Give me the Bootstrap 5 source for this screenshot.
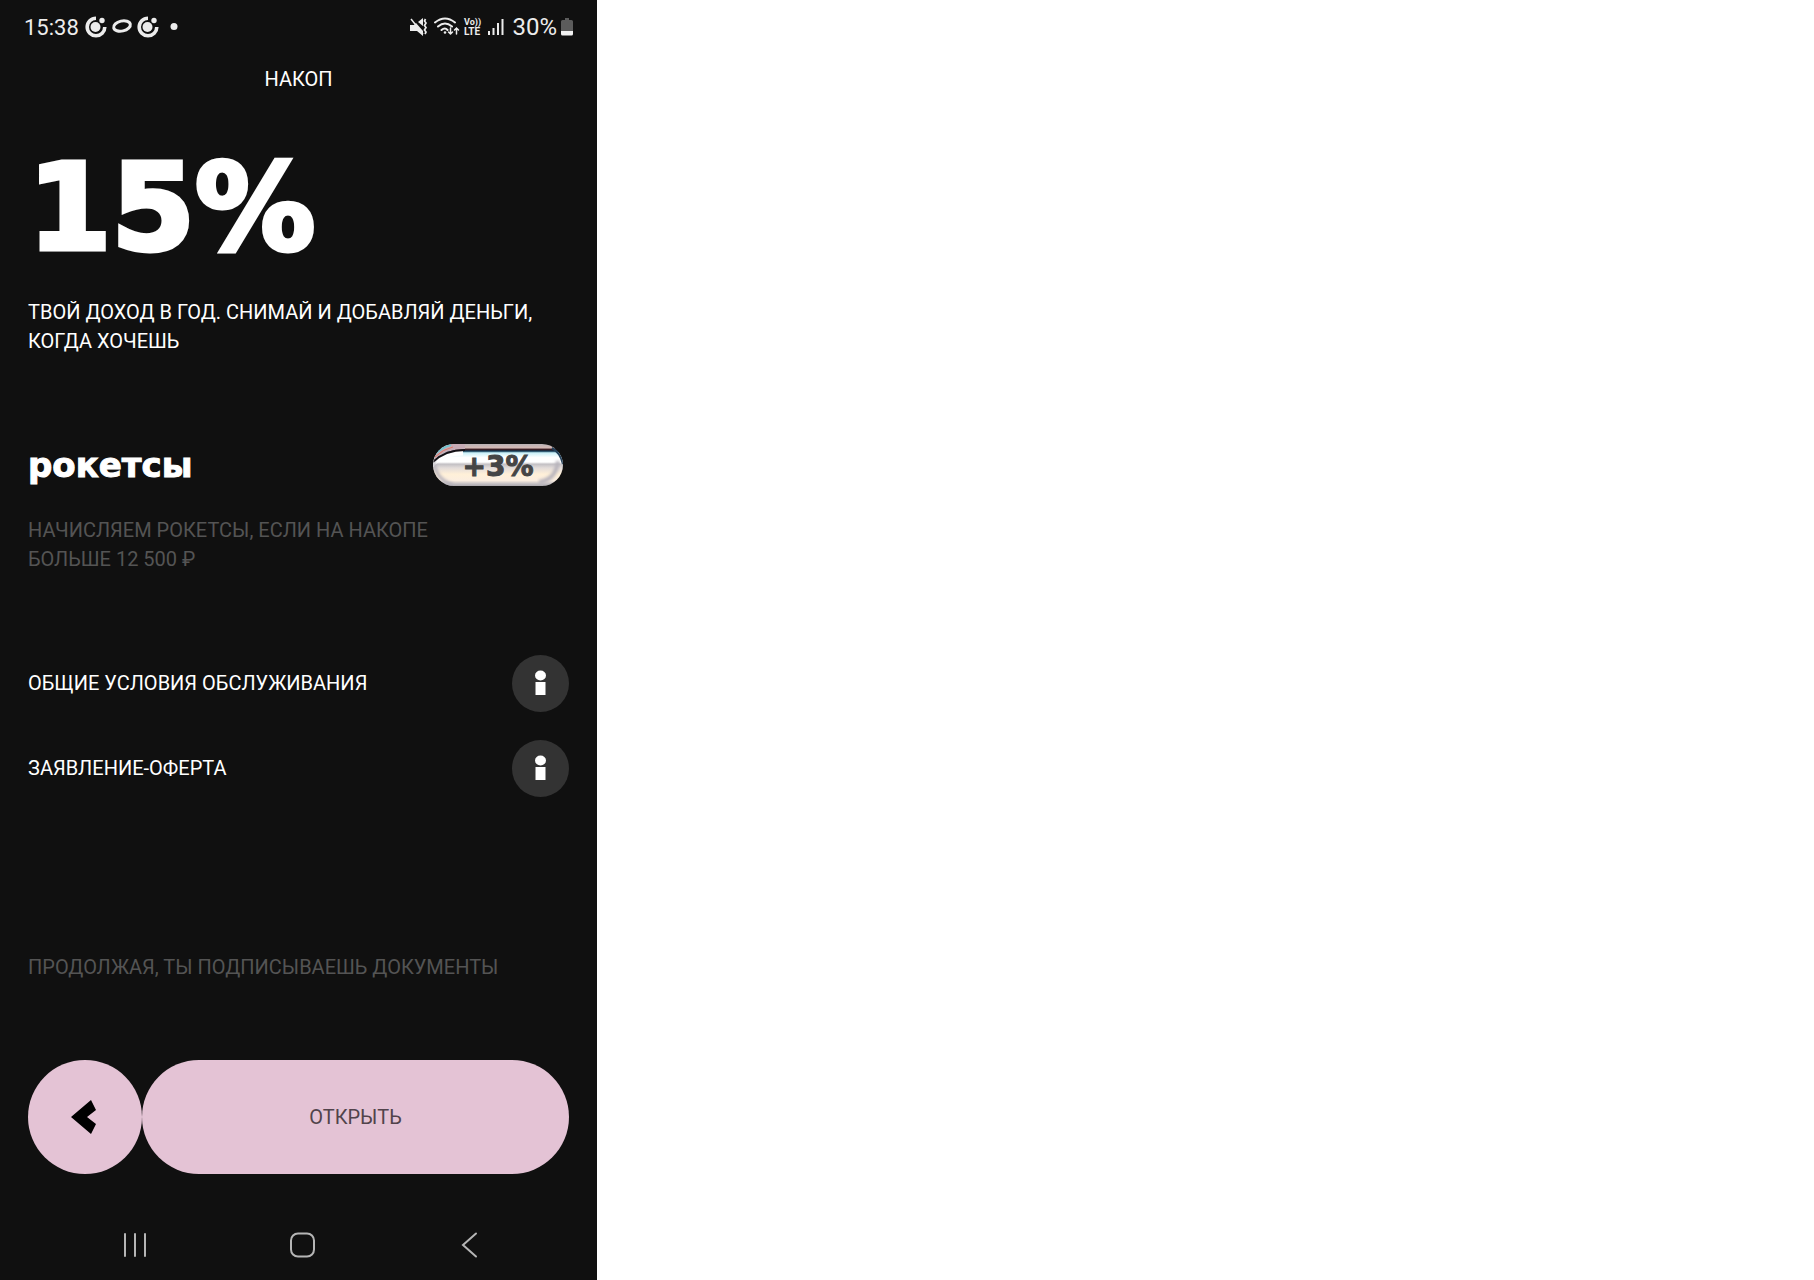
<!DOCTYPE html>
<html lang="ru">
<head>
<meta charset="utf-8">
<meta name="viewport" content="width=device-width, initial-scale=1">
<title>Накоп</title>
<link rel="stylesheet" href="https://cdn.jsdelivr.net/npm/bootstrap@5.3.0/dist/css/bootstrap.min.css">
<style>
  body { background: #fff; font-family: Roboto, "Liberation Sans", sans-serif; }
  .phone { max-width: 597px; background: #101010; color: #fff; font-size: 20px; line-height: 29px; font-family: Roboto, "Liberation Sans", sans-serif; }
  .status-bar { height: 54px; padding: 0 24px; color: #ececec; }
  .clock { font-size: 22px; }
  .status-left { gap: 6px; }
  .charge { font-size: 24px; }
  .screen-title { height: 50px; font-size: 20px; line-height: 50px; }
  .screen-body { padding: 0 28px; }
  .wide-face { font-family: "DejaVu Sans", sans-serif; font-weight: 700; }
  .rate { font-size: 120px; line-height: 116px; padding-top: 46px; -webkit-text-stroke: 5px #fff; }
  .rate-note { padding-top: 32px; }
  .bonus { padding: 88px 6px 0 0; }
  .bonus-name { font-size: 34px; line-height: 42px; -webkit-text-stroke: 1px #fff; }
  .bonus-pill { width: 130px; height: 42px; }
  .bonus-pill text { font-size: 28px; fill: #454545; stroke: #454545; stroke-width: 1px; }
  .dim { color: #545454; }
  .bonus-note { padding-top: 30px; max-width: 440px; }
  .docs { padding-top: 81px; gap: 28px; }
  .info-btn { width: 57px; height: 57px; background: #333; }
  .info-btn:hover { background: #444; }
  .consent { padding-top: 156px; }
  .actions { padding-top: 78px; }
  .pink { height: 114px; background: #e4c3d5; color: #51434b; font-size: 20px; }
  .pink:hover { background: #dab6ca; color: #51434b; }
  .pink-back { width: 114px; }
  .sys-nav { padding: 48px 98px 22px 106px; }
  svg { display: block; flex: none; }
</style>
</head>
<body>
<main class="phone w-100 min-vh-100 d-flex flex-column">
  <div class="status-bar d-flex align-items-center justify-content-between">
    <div class="status-left d-flex align-items-center">
      <span class="clock">15:38</span>
      <svg width="94" height="22" viewBox="0 0 94 22" fill="#ececec" aria-hidden="true">
        <defs>
          <g id="orbit"><path d="M11 2.2A8.800 8.800 0 1 0 19.800 11" fill="none" stroke="#ececec" stroke-width="3.600"/><circle cx="10.500" cy="11" r="5"/><circle cx="17" cy="4.500" r="2.700"/></g>
        </defs>
        <use href="#orbit"/>
        <ellipse cx="37" cy="10" rx="8.500" ry="5" fill="none" stroke="#ececec" stroke-width="3" transform="rotate(-13 37 10)"/>
        <use href="#orbit" x="52"/>
        <circle cx="89" cy="10.500" r="3.500"/>
      </svg>
    </div>
    <div class="d-flex align-items-center">
      <svg class="me-2" width="94" height="20" viewBox="0 0 94 20" fill="#ececec" aria-hidden="true">
        <path d="M0 8h4l2-2 7 8v5l-6-5H0zM8 5l5-4v8z"/>
        <path d="M1 2l12 15" stroke="#ececec" stroke-width="1.500"/>
        <path d="M15.500 2l-1 2 1.500 2-1.500 2.500 1.500 2-1.500 2.500 1.500 2-1 2" fill="none" stroke="#ececec" stroke-width="1.700"/>
        <g fill="none" stroke="#ececec" stroke-width="2" stroke-linecap="round">
          <path d="M25 5.500q10-8 20 0M28 9.500q7-6 14 0M31.500 13q3.500-3 6 0"/>
          <path stroke-width="1.500" d="M40.500 11v6m-2-2l2 2 2-2M46.500 17v-6m-2 2l2-2 2 2"/>
        </g>
        <circle cx="35" cy="15.500" r="1.300"/>
        <g font-family="Roboto, sans-serif" font-weight="700"><text x="54" y="8" font-size="9">Vo))</text><text x="54" y="18" font-size="10">LTE</text></g>
        <path d="M78 14h2v4h-2zM82.500 11h2v7h-2zM87 6h2v12h-2zM91.500 2h2v16h-2z"/>
      </svg>
      <span class="charge">30%</span>
      <svg class="ms-1" width="12" height="18" viewBox="0 0 12 18" aria-hidden="true">
        <path d="M4 0h4v2h2.500q1.500 0 1.500 1.500V13H0V3.500Q0 2 1.500 2H4z" fill="#5c5c5c"/><path d="M0 13h12v3q0 1.500-1.500 1.500h-9Q0 17.500 0 16z" fill="#f2f2f2"/>
      </svg>
    </div>
  </div>

  <h1 class="screen-title text-center fw-normal m-0">НАКОП</h1>

  <div class="screen-body">
    <div class="rate wide-face">15%</div>
    <p class="rate-note m-0">ТВОЙ ДОХОД В ГОД. СНИМАЙ И ДОБАВЛЯЙ ДЕНЬГИ, КОГДА ХОЧЕШЬ</p>

    <section>
      <div class="bonus d-flex align-items-center justify-content-between">
        <h2 class="bonus-name wide-face m-0">рокетсы</h2>
        <svg class="bonus-pill" viewBox="0 0 130 42" role="img" aria-label="+3%">
          <defs>
            <linearGradient id="chrome" x2="0" y2="1">
              <stop offset="0" stop-color="#b9b3b5"/><stop offset=".09" stop-color="#d4b9b5"/><stop offset=".13" stop-color="#3a1c22"/><stop offset=".17" stop-color="#0b3450"/><stop offset=".21" stop-color="#c9f0f8"/><stop offset=".32" stop-color="#fff"/><stop offset=".43" stop-color="#fff"/><stop offset=".48" stop-color="#c3c0c4"/><stop offset=".57" stop-color="#e3dcda"/><stop offset=".72" stop-color="#fff0d8"/><stop offset=".87" stop-color="#fbeee0"/><stop offset=".95" stop-color="#c2bec2"/><stop offset="1" stop-color="#aaa7ab"/>
            </linearGradient>
            <clipPath id="capsule"><rect width="130" height="42" rx="21"/></clipPath>
            <filter id="soft"><feGaussianBlur stdDeviation="1.500"/></filter>
          </defs>
          <g clip-path="url(#capsule)">
            <path fill="url(#chrome)" d="M0 0h130v42H0z"/>
            <path d="M-2 22Q8 9 30 9" fill="none" stroke="#fff" stroke-width="5"/>
            <path d="M-1 17Q12 5 32 5V0H0z" fill="#c6abb5"/>
            <path d="M0 18Q12 6 32 6" fill="none" stroke="#141015" stroke-width="2"/>
            <path d="M1 11Q9 3 18 1" fill="none" stroke="#71c5cf" stroke-width="2"/>
            <path d="M2 13Q10 5 20 3" fill="none" stroke="#df7866" stroke-width="1"/>
            <path d="M119 4Q127 8 130 20" fill="none" stroke="#25425b" stroke-width="2"/>
            <path d="M106 38Q123 36 125 17" fill="none" stroke="#b7b3bb" stroke-width="4" filter="url(#soft)"/>
            <path d="M1 18Q3 36 20 41" fill="none" stroke="#b7b3bb" stroke-width="3" filter="url(#soft)"/>
          </g>
          <text class="wide-face" x="65" y="32" text-anchor="middle">+3%</text>
        </svg>
      </div>
      <p class="bonus-note dim m-0">НАЧИСЛЯЕМ РОКЕТСЫ, ЕСЛИ НА НАКОПЕ БОЛЬШЕ 12 500 ₽</p>
    </section>

    <div class="docs d-flex flex-column">
      <div class="d-flex align-items-center justify-content-between">
        <span>ОБЩИЕ УСЛОВИЯ ОБСЛУЖИВАНИЯ</span>
        <button type="button" class="info-btn btn border-0 rounded-circle p-0 d-flex align-items-center justify-content-center" aria-label="Общие условия обслуживания">
          <svg width="12" height="28" viewBox="0 0 12 28" fill="#fff"><ellipse cx="5.500" cy="5.500" rx="5.500" ry="5"/><path d="M.5 12h10v13H.5z"/></svg>
        </button>
      </div>
      <div class="d-flex align-items-center justify-content-between">
        <span>ЗАЯВЛЕНИЕ-ОФЕРТА</span>
        <button type="button" class="info-btn btn border-0 rounded-circle p-0 d-flex align-items-center justify-content-center" aria-label="Заявление-оферта">
          <svg width="12" height="28" viewBox="0 0 12 28" fill="#fff"><ellipse cx="5.500" cy="5.500" rx="5.500" ry="5"/><path d="M.5 12h10v13H.5z"/></svg>
        </button>
      </div>
    </div>

    <p class="consent dim m-0">ПРОДОЛЖАЯ, ТЫ ПОДПИСЫВАЕШЬ ДОКУМЕНТЫ</p>

    <div class="actions d-flex">
      <button type="button" class="pink pink-back btn border-0 rounded-circle p-0 d-flex align-items-center justify-content-center flex-shrink-0" aria-label="Назад">
        <svg width="28" height="34" viewBox="0 0 28 34"><path d="M0 17 20 0l5 10-9 7 9 7-5 10z"/></svg>
      </button>
      <button type="button" class="pink btn border-0 rounded-pill flex-grow-1">ОТКРЫТЬ</button>
    </div>
  </div>

  <nav class="sys-nav d-flex align-items-center justify-content-between mt-auto" aria-label="Система">
    <button type="button" class="btn border-0 p-0 px-3" aria-label="Недавние"><svg width="26" height="26" viewBox="0 0 26 26" stroke="#b5b5b5" stroke-width="2" stroke-linecap="round"><path d="M3 2v22M13 2v22M23 2v22"/></svg></button>
    <button type="button" class="btn border-0 p-0" aria-label="Домой"><svg width="26" height="26" viewBox="0 0 26 26"><rect x="1" y="1.500" width="23" height="23" rx="7" fill="none" stroke="#b5b5b5" stroke-width="2"/></svg></button>
    <button type="button" class="btn border-0 p-0 px-3" aria-label="Назад"><svg width="26" height="26" viewBox="0 0 26 26" fill="none" stroke="#b5b5b5" stroke-width="2" stroke-linecap="round"><path d="M19 1.500 6 13l13 11.500"/></svg></button>
  </nav>
</main>
<script src="https://cdn.jsdelivr.net/npm/bootstrap@5.3.0/dist/js/bootstrap.bundle.min.js"></script>
</body>
</html>
